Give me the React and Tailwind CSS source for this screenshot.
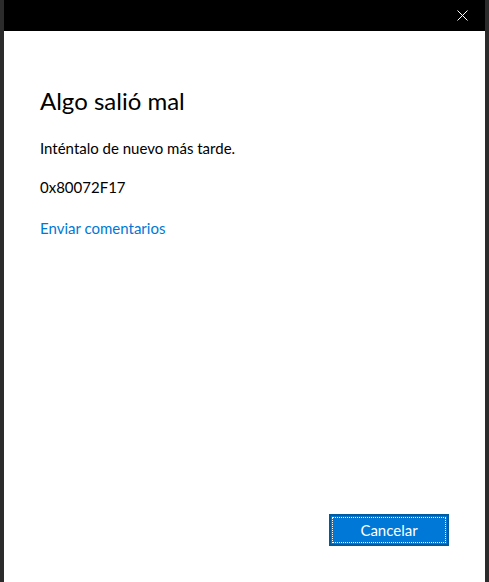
export default function App() {
  return (
    <div className="flex w-[489px] h-[582px] bg-[#2b2b2b]" style={{ fontFamily: 'Lato, "Noto Sans", sans-serif' }}>
      <div className="w-[4px] shrink-0 bg-[#2b2b2b]" />
      <div className="flex flex-col w-[481px] h-full">
        <div className="h-[31px] bg-black flex items-center justify-end shrink-0">
          <div className="w-[46px] h-[31px] flex items-center justify-center">
            <svg width="11" height="11" viewBox="0 0 11 11">
              <path d="M0.5 0.5 L10.5 10.5 M10.5 0.5 L0.5 10.5" stroke="white" strokeWidth="1" fill="none" />
            </svg>
          </div>
        </div>
        <div className="flex-1 bg-white flex flex-col px-[36px] pb-[36px]">
          <h1 className="mt-[54px] text-[24px] leading-[32px] text-black font-normal">Algo salió mal</h1>
          <p className="mt-[21px] text-[15px] leading-[20px] text-black">Inténtalo de nuevo más tarde.</p>
          <p className="mt-[19px] text-[15px] leading-[20px] text-black">0x80072F17</p>
          <a className="mt-[21px] text-[15px] leading-[20px] text-[#0078d7] self-start">Enviar comentarios</a>
          <div className="mt-auto self-end">
            <button className="w-[120px] h-[32px] bg-[#0078d7] border-2 border-[#005a9e] p-[1px] flex">
              <span className="flex-1 border border-dotted border-white flex items-center justify-center text-white text-[15px] leading-[20px]">Cancelar</span>
            </button>
          </div>
        </div>
      </div>
      <div className="w-[4px] shrink-0 bg-[#2b2b2b]" />
    </div>
  );
}
